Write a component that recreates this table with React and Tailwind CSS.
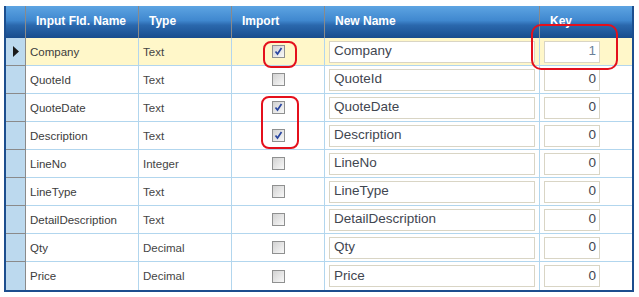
import React from "react";

const rows = [
  { name: "Company", type: "Text", imp: true, key: "1", current: true },
  { name: "QuoteId", type: "Text", imp: false, key: "0" },
  { name: "QuoteDate", type: "Text", imp: true, key: "0" },
  { name: "Description", type: "Text", imp: true, key: "0" },
  { name: "LineNo", type: "Integer", imp: false, key: "0" },
  { name: "LineType", type: "Text", imp: false, key: "0" },
  { name: "DetailDescription", type: "Text", imp: false, key: "0" },
  { name: "Qty", type: "Decimal", imp: false, key: "0" },
  { name: "Price", type: "Decimal", imp: false, key: "0" },
];

const headBg =
  "bg-[linear-gradient(to_bottom,#5da4e2_0%,#4088cf_45%,#2a68ad_60%,#184c8d_100%)]";

function CheckBox({ checked }) {
  return (
    <div className="w-[13px] h-[13px] border border-[#8f9090] bg-[linear-gradient(135deg,#d2d2d2,#f8f8f8)] flex items-center justify-center">
      {checked && (
        <svg width="9" height="9" viewBox="0 0 9 9">
          <path d="M1.5 4.5 L3.5 7 L7.5 1" fill="none" stroke="#2a46a0" strokeWidth="1.7" />
        </svg>
      )}
    </div>
  );
}

function HeadCell({ children, last }) {
  return (
    <div
      className={`${headBg} h-[32px] flex items-start pt-[6px] pl-[10px] text-white font-bold text-[12px] ${
        last ? "" : "border-r border-[#8a8a8a]"
      }`}
    >
      {children}
    </div>
  );
}

export default function App() {
  return (
    <div className="w-[639px] h-[297px] bg-white pt-[6px] pl-[4px] font-['Liberation_Sans',Arial,sans-serif]">
      <div className="w-[630px] border-x-2 border-b-2 border-[#1c4e8e] relative">
        <div className="grid grid-cols-[20px_113px_93px_93px_215px_92px]">
          <div className={`${headBg} h-[32px] border-r border-[#8a8a8a]`} />
          <HeadCell>Input Fld. Name</HeadCell>
          <HeadCell>Type</HeadCell>
          <HeadCell>Import</HeadCell>
          <HeadCell>New Name</HeadCell>
          <HeadCell last>Key</HeadCell>

          {rows.map((r, i) => {
            const bg = r.current ? "bg-[#fff7c9]" : "bg-white";
            const line = i === rows.length - 1 ? "" : "border-b border-[#b2d6ee]";
            return (
              <React.Fragment key={r.name}>
                <div
                  className={`h-[28px] bg-[#bcd9ee] border-r border-[#8a8a8a] flex items-center justify-center ${
                    i === rows.length - 1 ? "" : "border-b border-b-[#8a8a8a]"
                  }`}
                >
                  {r.current && (
                    <svg width="6" height="11" viewBox="0 0 6 11">
                      <path d="M0 0 L6 5.5 L0 11 Z" fill="#1a1a1a" />
                    </svg>
                  )}
                </div>
                <div className={`h-[28px] ${bg} ${line} border-r border-r-[#b2d6ee] flex items-center pl-[4px] pt-[2px] text-[11.5px] text-[#3c3c3c]`}>
                  {r.name}
                </div>
                <div className={`h-[28px] ${bg} ${line} border-r border-r-[#b2d6ee] flex items-center pl-[4px] pt-[2px] text-[11.5px] text-[#454545]`}>
                  {r.type}
                </div>
                <div className={`h-[28px] ${bg} ${line} border-r border-r-[#b2d6ee] flex items-center justify-center`}>
                  <CheckBox checked={r.imp} />
                </div>
                <div className={`h-[28px] ${bg} ${line} border-r border-r-[#b2d6ee] flex items-center pl-[4px]`}>
                  <div className="w-[206px] h-[22px] bg-white border border-[#d9d5c5] flex items-center pl-[4px] text-[13.5px] text-[#3f4650]">
                    {r.name}
                  </div>
                </div>
                <div className={`h-[28px] ${bg} ${line} flex items-center pl-[4px]`}>
                  <div
                    className={`w-[56px] h-[22px] bg-white border border-[#d9d5c5] flex items-center justify-end pr-[3px] text-[13.5px] ${
                      r.current ? "text-[#6a7f98]" : "text-[#3f4650]"
                    }`}
                  >
                    {r.key}
                  </div>
                </div>
              </React.Fragment>
            );
          })}
        </div>

        {/* red markup rings */}
        <div className="absolute left-[257px] top-[35px] w-[34px] h-[27px] border-2 border-[#e4101c] rounded-[8px]" />
        <div className="absolute left-[255px] top-[90px] w-[38px] h-[53px] border-2 border-[#e4101c] rounded-[8px]" />
        <div className="absolute left-[525px] top-[18px] w-[87px] h-[46px] border-2 border-[#e4101c] rounded-[10px]" />
      </div>
    </div>
  );
}
